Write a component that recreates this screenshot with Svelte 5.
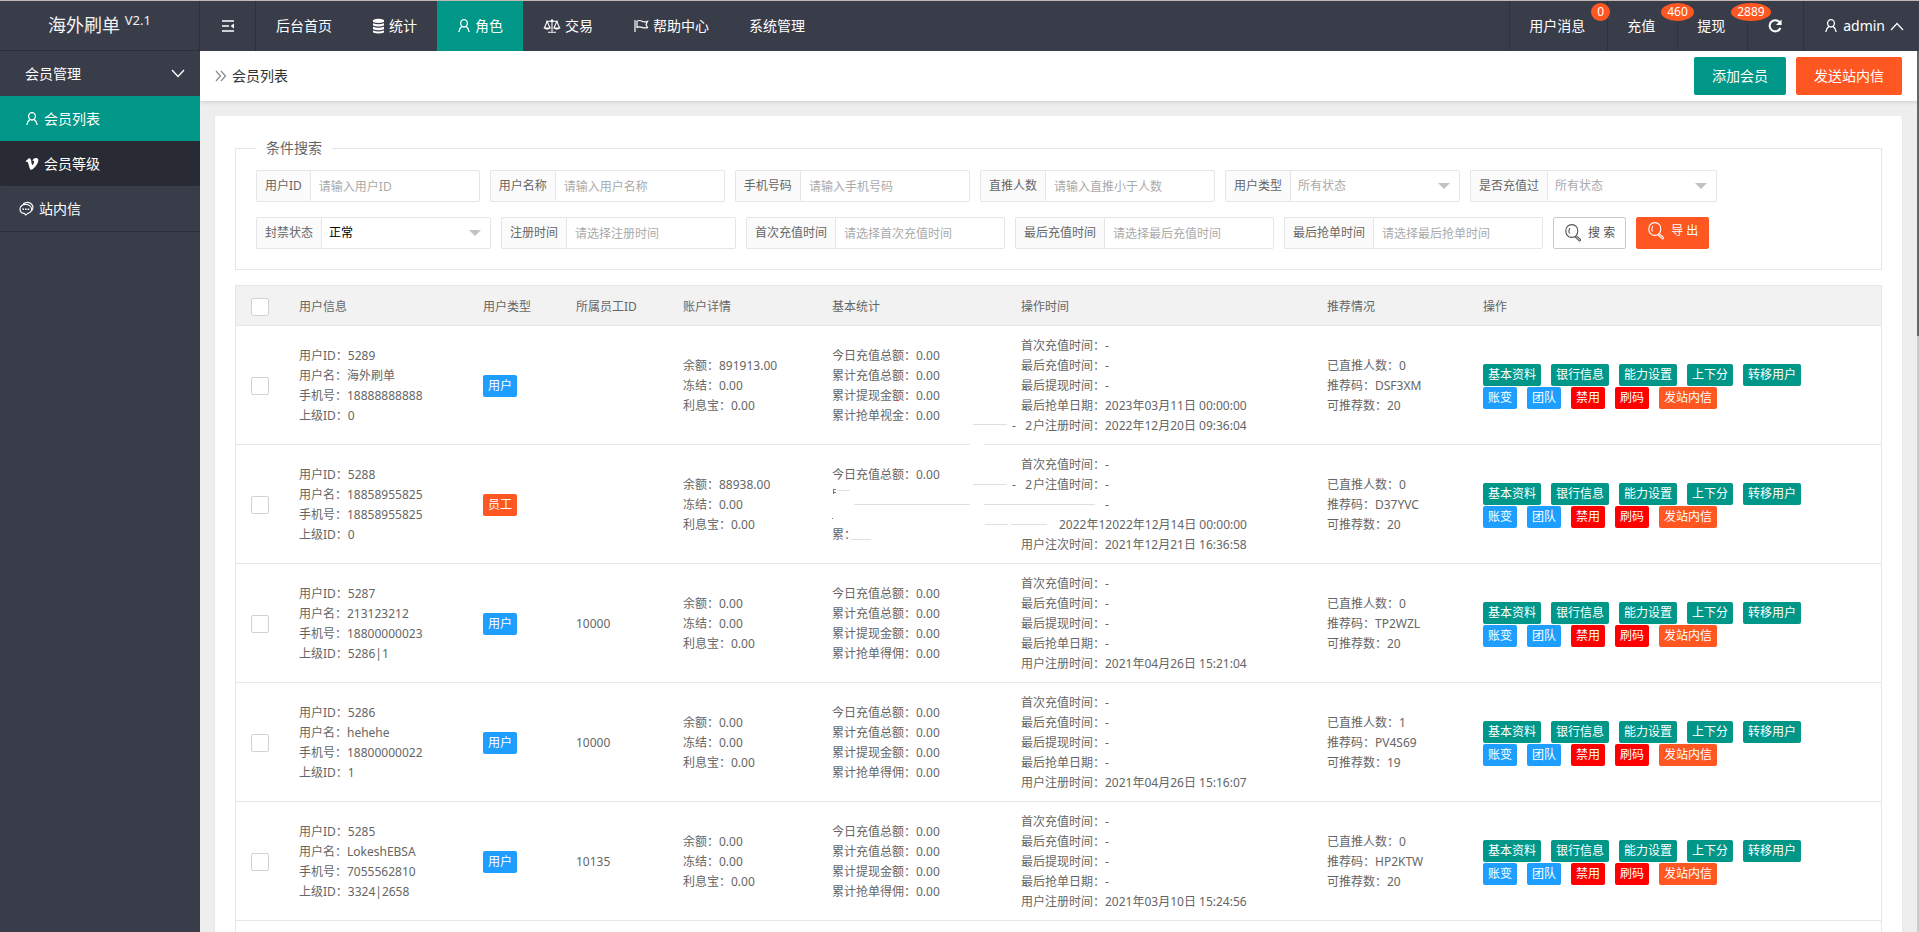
<script>
	let navs = [
		{ title: '后台首页' },
		{ title: '统计', icon: 'db' },
		{ title: '角色', icon: 'user', active: true },
		{ title: '交易', icon: 'scale' },
		{ title: '帮助中心', icon: 'flag' },
		{ title: '系统管理' }
	];

	let notices = [
		{ title: '用户消息', count: 0 },
		{ title: '充值', count: 460 },
		{ title: '提现', count: 2889 }
	];

	let filters = [
		{ id: 'uid', label: '用户ID', hint: '请输入用户ID' },
		{ id: 'name', label: '用户名称', hint: '请输入用户名称' },
		{ id: 'phone', label: '手机号码', hint: '请输入手机号码' },
		{ id: 'invite', label: '直推人数', hint: '请输入直推小于人数' },
		{ id: 'type', label: '用户类型', options: ['所有状态', '用户', '员工'] },
		{ id: 'paid', label: '是否充值过', options: ['所有状态', '是', '否'] },
		{ id: 'status', label: '封禁状态', options: ['正常', '禁用'], chosen: true },
		{ id: 'reg', label: '注册时间', hint: '请选择注册时间' },
		{ id: 'first', label: '首次充值时间', hint: '请选择首次充值时间' },
		{ id: 'last', label: '最后充值时间', hint: '请选择最后充值时间' },
		{ id: 'grab', label: '最后抢单时间', hint: '请选择最后抢单时间' }
	];

	let heads = ['用户信息', '用户类型', '所属员工ID', '账户详情', '基本统计', '操作时间', '推荐情况', '操作'];

	let stats = ['今日充值总额：0.00', '累计充值总额：0.00', '累计提现金额：0.00', '累计抢单得佣：0.00'];

	function times(reg) {
		return [
			{ text: '首次充值时间：-' },
			{ text: '最后充值时间：-' },
			{ text: '最后提现时间：-' },
			{ text: '最后抢单日期：-' },
			{ text: '用户注册时间：' + reg }
		];
	}

	let rows = [
		{
			id: 5289, name: '海外刷单', phone: '18888888888', parent: '0', type: '用户', staff: '',
			balance: '891913.00', invited: 0, code: 'DSF3XM', left: 20,
			stats: ['今日充值总额：0.00', '累计充值总额：0.00', '累计提现金额：0.00', '累计抢单视金：0.00'],
			times: [
				{ text: '首次充值时间：-' },
				{ text: '最后充值时间：-' },
				{ text: '最后提现时间：-' },
				{ text: '最后抢单日期：2023年03月11日 00:00:00' },
				{ stray: '-   2', text: '户注册时间：2022年12月20日 09:36:04' }
			]
		},
		{
			id: 5288, name: '18858955825', phone: '18858955825', parent: '0', type: '员工', staff: '',
			balance: '88938.00', invited: 0, code: 'D37YVC', left: 20,
			stats: ['今日充值总额：0.00', '', '', '累：'],
			times: [
				{ text: '首次充值时间：-' },
				{ stray: '-   2', text: '户注值时间：-' },
				{ text: '-', indent: 'wide' },
				{ text: '2022年12022年12月14日 00:00:00', indent: 'half' },
				{ text: '用户注次时间：2021年12月21日 16:36:58' }
			]
		},
		{
			id: 5287, name: '213123212', phone: '18800000023', parent: '5286|1', type: '用户', staff: '10000',
			balance: '0.00', invited: 0, code: 'TP2WZL', left: 20,
			stats, times: times('2021年04月26日 15:21:04')
		},
		{
			id: 5286, name: 'hehehe', phone: '18800000022', parent: '1', type: '用户', staff: '10000',
			balance: '0.00', invited: 1, code: 'PV4S69', left: 19,
			stats, times: times('2021年04月26日 15:16:07')
		},
		{
			id: 5285, name: 'LokeshEBSA', phone: '7055562810', parent: '3324|2658', type: '用户', staff: '10135',
			balance: '0.00', invited: 0, code: 'HP2KTW', left: 20,
			stats, times: times('2021年03月10日 15:24:56')
		}
	];

	let actions = [
		[
			['基本资料', 'green'],
			['银行信息', 'green'],
			['能力设置', 'green'],
			['上下分', 'green'],
			['转移用户', 'green']
		],
		[
			['账变', 'blue'],
			['团队', 'blue'],
			['禁用', 'red'],
			['刷码', 'red'],
			['发站内信', 'orange']
		]
	];
</script>

{#snippet icon(name)}
	{#if name === 'db'}
		<svg width="13" height="16" viewBox="0 0 13 16" fill="currentColor">
			<path d="M1 2Q6.5 -.4 12 2V4Q6.5 6 1 4ZM1 5.2Q6.5 7.2 12 5.2V7.6Q6.5 9.6 1 7.6ZM1 8.8Q6.5 10.8 12 8.8V11.2Q6.5 13.2 1 11.2ZM1 12.4Q6.5 14.4 12 12.4V14.4Q6.5 16.4 1 14.4Z" />
		</svg>
	{:else if name === 'user'}
		<svg width="14" height="16" viewBox="0 0 14 16" fill="none" stroke="currentColor" stroke-width="1.3">
			<path d="M7 1.6A3.4 3.7 0 1 1 7 9A3.4 3.7 0 1 1 7 1.6ZM5 8.4C3.2 9.6 2.2 11.4 1.8 14M9 8.4C10.8 9.6 11.8 11.4 12.2 14" />
		</svg>
	{:else if name === 'scale'}
		<svg width="18" height="16" viewBox="0 0 18 16" fill="none" stroke="currentColor" stroke-width="1.1">
			<path d="M9 1V13.5M5 14.3H13M3 3.2H15M4.2 3.5L1.3 10H7.1ZM13.8 3.5L10.9 10H16.7Z" />
			<path d="M1 10Q4.2 13.4 7.4 10ZM10.6 10Q13.8 13.4 17 10ZM7.5 2.2H10.5V4H7.5Z" fill="currentColor" stroke="none" />
		</svg>
	{:else if name === 'flag'}
		<svg width="16" height="16" viewBox="0 0 16 16" fill="none" stroke="currentColor" stroke-width="1.2">
			<path d="M2 2V14M4 3.2Q6.5 1.8 9 3.2T14.5 3.4L13 6.5L14.5 9.6Q11.5 10.4 9 9.4T4 9.4Z" />
		</svg>
	{:else if name === 'vimeo'}
		<svg width="14" height="14" viewBox="0 0 14 14" fill="currentColor">
			<path d="M.6 4.2L1.4 5.1Q2.5 4.3 2.9 5.2L4.7 11.4Q5.7 14 8.2 11.8Q12.7 7.6 13.3 4.1Q13.7 1 11 .9Q8.2 1 7.4 4Q9.3 3.3 9.1 5.1Q8.8 6.6 7.7 7.9Q7 8.2 6.7 6.8L6 2.9Q5.5 .5 3.5 1.5Z" />
		</svg>
	{:else if name === 'chat'}
		<svg width="15" height="15" viewBox="0 0 15 15" fill="none" stroke="currentColor" stroke-width="1.1">
			<path d="M4.2 2.8Q7.8 .2 11.6 2.2Q15.4 5 13 9.5M6.8 3.4C3.2 3.4 1 5.4 1 8S3 12.2 5 12.4L6.8 14L8.6 12.4C11 12 12.6 10.4 12.6 8S10.2 3.4 6.8 3.4Z" />
			<path d="M3.4 7.4H5V9H3.4ZM6 7.4H7.6V9H6ZM8.6 7.4H10.2V9H8.6Z" fill="currentColor" stroke="none" />
		</svg>
	{:else if name === 'search'}
		<svg width="18" height="20" viewBox="0 0 18 20" fill="none" stroke="currentColor" stroke-width="1.1">
			<path d="M7.8 1.6C4.2 1.6 1.8 4.4 1.8 8S4.2 14.4 7.8 14.4S13.8 11.6 13.8 8S11.4 1.6 7.8 1.6ZM5.8 5Q4.2 7.6 5.4 10.6M12 12.6L16.4 16.4Q16.8 17.8 15.4 18L11 13.8" />
		</svg>
	{/if}
{/snippet}

<div class="layout">
	<aside>
		<div class="logo">海外刷单 <sup>V2.1</sup></div>
		<a class="group" href="#member">
			会员管理
			<svg width="14" height="9" viewBox="0 0 14 9" fill="none" stroke="currentColor" stroke-width="1.3"><path d="M1 1L7 7.5L13 1" /></svg>
		</a>
		<div class="child">
			<a class="active" href="#list">{@render icon('user')}会员列表</a>
			<a href="#level">{@render icon('vimeo')}会员等级</a>
		</div>
		<a class="single" href="#mail">{@render icon('chat')}站内信</a>
	</aside>

	<div class="right">
		<header>
			<button class="shrink" aria-label="收起菜单">
				<svg width="14" height="14" viewBox="0 0 14 14" fill="none" stroke="currentColor" stroke-width="1.6"><path d="M1 2H13M1 7H8M1 12H13" /><path d="M13 4.6V9.4L9.6 7Z" fill="currentColor" stroke="none" /></svg>
			</button>
			<nav>
				{#each navs as nav}
					<a class:active={nav.active} href="#nav">{@render icon(nav.icon)}{nav.title}</a>
				{/each}
			</nav>
			<div class="tools">
				{#each notices as notice}
					<a class="notice" href="#notice">{notice.title}<span class="count">{notice.count}</span></a>
				{/each}
				<button class="reload" aria-label="刷新">
					<svg width="16" height="16" viewBox="0 0 16 16" fill="none" stroke="currentColor" stroke-width="2"><path d="M12.6 4.2A5.6 5.6 0 1 0 13.4 10" /><path d="M14.6 1.4V7H9Z" fill="currentColor" stroke="none" /></svg>
				</button>
				<a class="admin" href="#admin">
					{@render icon('user')}admin
					<svg width="14" height="9" viewBox="0 0 14 9" fill="none" stroke="currentColor" stroke-width="1.2"><path d="M1 8L7 1.5L13 8" /></svg>
				</a>
			</div>
		</header>

		<main>
			<div class="crumb">
				<svg width="12" height="12" viewBox="0 0 12 12" fill="none" stroke="#888" stroke-width="1.2"><path d="M1 1L5.5 6L1 11M6 1L10.5 6L6 11" /></svg>
				<h1>会员列表</h1>
				<button class="btn green">添加会员</button>
				<button class="btn orange">发送站内信</button>
			</div>

			<div class="card">
				<fieldset>
					<legend>条件搜索</legend>
					<form on:submit|preventDefault>
						{#each filters as f}
							<div class="item">
								<label for={f.id}>{f.label}</label>
								{#if f.options}
									<div class="select">
										<select id={f.id} class:chosen={f.chosen}>
											{#each f.options as option}
												<option>{option}</option>
											{/each}
										</select>
									</div>
								{:else}
									<input id={f.id} type="text" placeholder={f.hint} autocomplete="off">
								{/if}
							</div>
						{/each}
						<button class="search">{@render icon('search')}搜 索</button>
						<button class="search export" type="button">{@render icon('search')}导 出</button>
					</form>
				</fieldset>

				<div class="table">
					<table>
						<colgroup>
							<col class="w-check"><col class="w-info"><col class="w-type"><col class="w-staff"><col class="w-account"><col class="w-stats"><col class="w-time"><col class="w-invite"><col>
						</colgroup>
						<thead>
							<tr>
								<th><input type="checkbox" aria-label="全选"></th>
								{#each heads as head}
									<th>{head}</th>
								{/each}
							</tr>
						</thead>
						<tbody>
							{#each rows as row}
								<tr>
									<td><input type="checkbox" aria-label={'选择 ' + row.id}></td>
									<td>
										<div>用户ID：{row.id}</div>
										<div>用户名：{row.name}</div>
										<div>手机号：{row.phone}</div>
										<div>上级ID：{row.parent}</div>
									</td>
									<td><span class="tag {row.type === '员工' ? 'orange' : 'blue'}">{row.type}</span></td>
									<td>{row.staff}</td>
									<td>
										<div>余额：{row.balance}</div>
										<div>冻结：0.00</div>
										<div>利息宝：0.00</div>
									</td>
									<td>
										{#each row.stats as line}
											<div class="line">{line}</div>
										{/each}
									</td>
									<td>
										{#each row.times as line}
											<div class="line {line.indent ?? ''}">{#if line.stray}<span class="stray">{line.stray}</span>{/if}{line.text}</div>
										{/each}
									</td>
									<td>
										<div>已直推人数：{row.invited}</div>
										<div>推荐码：{row.code}</div>
										<div>可推荐数：{row.left}</div>
									</td>
									<td>
										<div class="actions">
											{#each actions as group}
												<div>
													{#each group as [title, color]}
														<button class="tag {color}">{title}</button>
													{/each}
												</div>
											{/each}
										</div>
									</td>
								</tr>
							{/each}
						</tbody>
					</table>
					<!-- broken hairlines across the first two rows -->
					<svg class="traces" width="300" height="180" viewBox="0 0 300 180" fill="none" stroke="#e0e0e0">
						<path d="M170 64.5H184" stroke="#fff" stroke-width="2" />
						<path d="M173 44.5H207M173 104.5H206M54 124.5H170M184 124.5H295M185 144.5H208M211 144.5H247M51 159.5H71M37 110.5H50" />
						<path d="M33 109.5H36M33.5 109V114M33 112.5H36M32 138.5H33" stroke="#777" />
						<path d="M96 20.5H98" stroke="#f33" />
					</svg>
				</div>
			</div>
			<div class="scroll"><span></span></div>
		</main>
	</div>
</div>

<style>
:global(body) {
	font: 14px/20px "Noto Sans", "Noto Sans CJK SC", sans-serif;
	color: #666;
	background-color: #eee;
	overflow: hidden;
}
:global(*) {
	box-sizing: border-box;
}
a {
	color: #fff;
	text-decoration: none;
}
button, input, select {
	font: inherit;
	margin: 0;
}
button {
	cursor: pointer;
	border: none;
}
svg {
	flex: none;
}
.green {
	background-color: #009688;
}
.blue {
	background-color: #1e9fff;
}
.red {
	background-color: #f00;
}
.orange {
	background-color: #ff5722;
}
.layout {
	display: flex;
	height: 100vh;
	border-top: 1px solid #c4b7b1;
}
aside {
	width: 200px;
	flex: none;
	background-color: #393d49;
}
.logo {
	height: 50px;
	line-height: 48px;
	border-bottom: 1px solid #2d303a;
	border-right: 1px solid #2d303a;
	text-align: center;
	font-size: 18px;
	color: #f2f2f2;
}
sup {
	font-size: 13px;
	line-height: 12px;
}
aside a {
	display: flex;
	align-items: center;
	height: 45px;
}
.group {
	justify-content: space-between;
	padding: 0 15px 0 25px;
}
.child {
	background-color: #282b33;
	border-radius: 0 0 2px 2px;
}
.child a {
	gap: 5px;
	padding-left: 25px;
}
.child .active,
nav .active {
	background-color: #009688;
}
aside .single {
	gap: 5px;
	height: 46px;
	padding-left: 19px;
	border-bottom: 1px solid #2d303a;
}
.right {
	flex: 1;
	min-width: 0;
	display: flex;
	flex-direction: column;
}
header {
	display: flex;
	height: 50px;
	flex: none;
	background-color: #393d49;
}
.shrink {
	display: flex;
	align-items: center;
	justify-content: center;
	width: 56px;
	color: #fff;
	background: none;
	border-right: 1px solid #2d303a;
}
nav, .tools {
	display: flex;
}
nav a {
	display: flex;
	align-items: center;
	gap: 4px;
	padding: 0 20px;
}
.tools {
	margin-left: auto;
}
.tools > * {
	display: flex;
	align-items: center;
	border-left: 1px solid #30333d;
}
.notice {
	position: relative;
	padding: 0 22px 0 19px;
}
.count {
	position: absolute;
	top: 2px;
	left: calc(100% - 16px);
	z-index: 1;
	padding: 0 6px;
	font-size: 12px;
	line-height: 18px;
	border-radius: 50%;
	background-color: #ff5722;
}
.reload {
	padding: 0 20px 0 19px;
	color: #fff;
	background: none;
}
.admin {
	gap: 5px;
	padding: 0 15px 0 20px;
}
main {
	position: relative;
	flex: 1;
	min-height: 0;
	display: flex;
	flex-direction: column;
	overflow: hidden;
}
.crumb {
	display: flex;
	align-items: center;
	gap: 5px;
	height: 50px;
	flex: none;
	padding: 0 17px 0 15px;
	background-color: #fff;
	box-shadow: 0 1px 4px rgba(0, 0, 0, 0.15);
}
h1 {
	flex: 1;
	margin: 0;
	font-size: 14px;
	font-weight: 400;
	color: #333;
}
.btn {
	height: 38px;
	padding: 0 18px;
	margin-left: 5px;
	color: #fff;
	border-radius: 2px;
}
.card {
	flex: 1;
	display: flex;
	flex-direction: column;
	margin: 15px 17px 0 15px;
	padding: 20px 20px 0;
	background-color: #fff;
	border-radius: 2px 2px 0 0;
	box-shadow: 0 1px 2px rgba(0, 0, 0, 0.08);
}
fieldset {
	margin: 0 0 15px;
	padding: 10px 20px 20px;
	border: 1px solid #e6e6e6;
}
legend {
	padding: 0 10px;
	line-height: 24px;
}
form {
	display: flex;
	flex-wrap: wrap;
	gap: 15px 10px;
	font-size: 12px;
}
.item {
	display: flex;
	height: 32px;
}
.item label {
	padding: 0 8px;
	line-height: 30px;
	border: 1px solid #e6e6e6;
	border-right: none;
	border-radius: 2px 0 0 2px;
	background-color: #fbfbfb;
}
.item input, select {
	width: 170px;
	height: 32px;
	padding: 0 8px;
	border: 1px solid #e6e6e6;
	border-radius: 0 2px 2px 0;
	background-color: #fff;
	outline: none;
}
.item select {
	padding: 0 7px;
}
.item input::placeholder {
	color: #aaa;
	opacity: 1;
}
.select {
	position: relative;
}
.select::after {
	content: '';
	position: absolute;
	right: 10px;
	top: 13px;
	border: 6px solid transparent;
	border-top-color: #c2c2c2;
	pointer-events: none;
}
select {
	appearance: none;
	color: #aaa;
}
.chosen {
	color: #000;
}
.search {
	display: flex;
	align-items: center;
	gap: 6px;
	height: 32px;
	padding: 0 10px;
	color: #555;
	background-color: #fff;
	border: 1px solid #c9c9c9;
	border-radius: 2px;
}
.export {
	padding-bottom: 4px;
	color: #fff;
	background-color: #ff5722;
	border-color: #ff5722;
}
.table {
	position: relative;
	flex: 1;
	border: 1px solid #e6e6e6;
	border-bottom: none;
}
table {
	width: 100%;
	table-layout: fixed;
	border-collapse: separate;
	border-spacing: 0;
	font-size: 12px;
}
.w-check { width: 48px; }
.w-info { width: 184px; }
.w-type { width: 93px; }
.w-staff { width: 107px; }
.w-account { width: 149px; }
.w-stats { width: 189px; }
.w-time { width: 306px; }
.w-invite { width: 156px; }
th, td {
	padding: 10px 15px 8px;
	border-bottom: 1px solid #e6e6e6;
	text-align: left;
	font-weight: 400;
	white-space: nowrap;
}
th {
	height: 40px;
	background-color: #f2f2f2;
}
.line {
	height: 20px;
}
.wide {
	padding-left: 84px;
}
.half {
	padding-left: 38px;
}
.stray {
	display: inline-block;
	width: 21px;
	margin-left: -9px;
	white-space: pre;
}
input[type="checkbox"] {
	display: block;
	appearance: none;
	width: 18px;
	height: 18px;
	border: 1px solid #d2d2d2;
	background-color: #fff;
	border-radius: 2px;
}
.tag {
	display: inline-block;
	height: 22px;
	padding: 0 5px;
	line-height: 22px;
	color: #fff;
	border-radius: 2px;
}
.actions {
	display: flex;
	flex-direction: column;
	gap: 1px;
}
.actions div {
	display: flex;
	gap: 10px;
}
.traces {
	position: absolute;
	left: 564px;
	top: 94px;
	pointer-events: none;
}
.scroll {
	position: absolute;
	top: 0;
	right: 0;
	bottom: 0;
	width: 2px;
	background-color: #ccc;
}
.scroll span {
	display: block;
	height: 285px;
	background-color: #666;
}
</style>
